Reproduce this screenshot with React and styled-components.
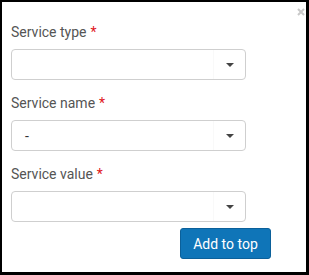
import React from 'react'
import styled, { createGlobalStyle } from 'styled-components'

const GlobalStyle = createGlobalStyle`
  html, body {
    margin: 0;
    padding: 0;
    background: #fff;
  }
  body {
    font-family: Roboto, "Liberation Sans", Arial, sans-serif;
  }
`

const Panel = styled.div`
  position: relative;
  box-sizing: border-box;
  width: 309px;
  height: 275px;
  border-style: solid;
  border-color: #000;
  border-width: 2px 3px 3px 2px;
  background: #fff;
  padding: 20px 0 0 9px;
  display: flex;
  flex-direction: column;
  gap: 13px;
`

const CloseButton = styled.button`
  position: absolute;
  top: 6px;
  right: 1px;
  width: 8px;
  height: 8px;
  padding: 0;
  border: none;
  background: transparent;
  display: flex;
`

const Field = styled.div`
  display: flex;
  flex-direction: column;
  gap: 7px;
`

const Label = styled.label`
  font-size: 14px;
  line-height: 20px;
  color: #555;
`

const Required = styled.span`
  color: #e0161b;
  margin-left: 4px;
`

const Select = styled.div`
  box-sizing: border-box;
  width: 235px;
  height: 31px;
  border: 1px solid #cfcfcf;
  border-radius: 4px;
  display: flex;
  align-items: center;
  background: #fff;
`

const Value = styled.span`
  flex: 1;
  padding-left: 13px;
  font-size: 14px;
  color: #333;
`

// faint divider in front of the caret, barely visible in the original
const Arrow = styled.span`
  width: 32px;
  height: 100%;
  box-sizing: border-box;
  border-left: 1px solid #f9f9f9;
  display: flex;
  align-items: center;
  justify-content: center;
  &::after {
    content: '';
    border-left: 4px solid transparent;
    border-right: 4px solid transparent;
    border-top: 4px solid #444;
  }
`

const Actions = styled.div`
  width: 260px;
  display: flex;
  justify-content: flex-end;
  margin-top: -7px;
`

const PrimaryButton = styled.button`
  box-sizing: border-box;
  height: 31px;
  width: 91px;
  padding: 0;
  border: 1px solid #0b609a;
  border-radius: 3px;
  background: #0f75b8;
  color: #fff;
  font-family: Roboto, "Liberation Sans", Arial, sans-serif;
  font-size: 14px;
`

const fields = [
  { label: 'Service type', value: '' },
  { label: 'Service name', value: '-' },
  { label: 'Service value', value: '' },
]

const App = () => {
  return (
    <>
      <GlobalStyle />
      <Panel>
        <CloseButton aria-label="Close">
          <svg width="8" height="8" viewBox="0 0 8 8">
            <path d="M1 1 L7 7 M7 1 L1 7" stroke="#c9c9c9" strokeWidth="2" />
          </svg>
        </CloseButton>
        {fields.map(f => (
          <Field key={f.label}>
            <Label>
              {f.label}
              <Required>*</Required>
            </Label>
            <Select>
              <Value>{f.value}</Value>
              <Arrow />
            </Select>
          </Field>
        ))}
        <Actions>
          <PrimaryButton>Add to top</PrimaryButton>
        </Actions>
      </Panel>
    </>
  )
}

export default App
